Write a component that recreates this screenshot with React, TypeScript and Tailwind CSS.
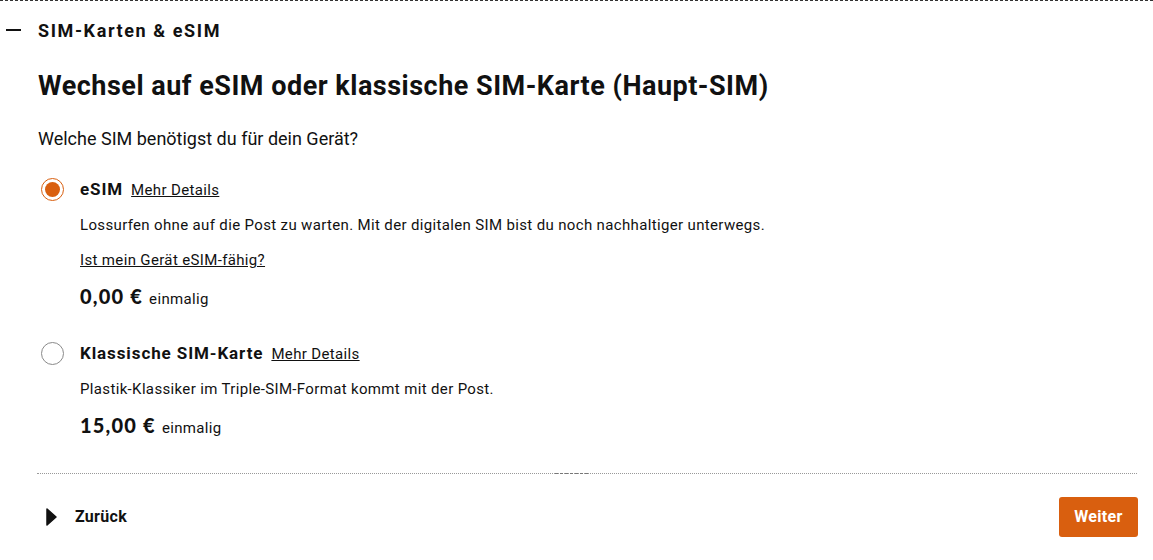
import React, {useState} from "react";

type SimOption = {
  id: string;
  label: string;
  description: string;
  checkLink?: string;
  price: string;
};

const OPTIONS: SimOption[] = [
  {
    id: "esim",
    label: "eSIM",
    description:
      "Lossurfen ohne auf die Post zu warten. Mit der digitalen SIM bist du noch nachhaltiger unterwegs.",
    checkLink: "Ist mein Gerät eSIM-fähig?",
    price: "0,00 €",
  },
  {
    id: "classic",
    label: "Klassische SIM-Karte",
    description: "Plastik-Klassiker im Triple-SIM-Format kommt mit der Post.",
    price: "15,00 €",
  },
];

const Radio = ({checked}: {checked: boolean}) => (
  <span
    className={`flex items-center justify-center w-[23px] h-[23px] rounded-full border shrink-0 ${
      checked ? "border-[#d95f0f]" : "border-[#8a8a8a]"
    }`}
  >
    {checked && <span className="w-[15px] h-[15px] rounded-full bg-[#d95f0f]" />}
  </span>
);

const OptionRow = ({
  option,
  checked,
  onSelect,
}: {
  option: SimOption;
  checked: boolean;
  onSelect: Function;
}) => (
  <div className="flex" onClick={() => onSelect(option.id)}>
    <div className="w-[42px] pl-[3px] pt-[1px]">
      <Radio checked={checked} />
    </div>
    <div className="flex flex-col">
      <div className="flex items-baseline gap-[8px] h-[26px]">
        <span className="text-[17px] font-bold tracking-[0.9px]">{option.label}</span>
        <a className="text-[15px] underline tracking-[0.35px] cursor-pointer">Mehr Details</a>
      </div>
      <p className="text-[15px] mt-[12px] leading-[20px] tracking-[0.35px]">{option.description}</p>
      {option.checkLink && (
        <a className="text-[15px] underline mt-[15px] leading-[20px] tracking-[0.35px] cursor-pointer">
          {option.checkLink}
        </a>
      )}
      <div className="flex items-baseline gap-[6px] mt-[11px]">
        <span className="font-['Lato'] font-black text-[20px] tracking-[1.2px]">{option.price}</span>
        <span className="text-[15px] tracking-[0.35px]">einmalig</span>
      </div>
    </div>
  </div>
);

export default function App() {
  const [selected, setSelected] = useState("esim");

  return (
    <div className="w-[1153px] h-[560px] bg-white text-[#111] font-['Roboto',sans-serif] border-t border-dashed border-[#333] overflow-hidden">
      <div className="flex items-center h-[58px] pl-[6px]">
        <span className="w-[15px] h-[2px] bg-[#111] mr-[17px]" />
        <span className="text-[18px] font-bold tracking-[1.6px]">SIM-Karten &amp; eSIM</span>
      </div>
      <div className="px-[38px]">
        <h2 className="text-[27px] font-bold leading-[34px] mt-[10px] tracking-[0.5px]">
          Wechsel auf eSIM oder klassische SIM-Karte (Haupt-SIM)
        </h2>
        <p className="text-[18px] mt-[24px] leading-[24px]">
          Welche SIM benötigst du für dein Gerät?
        </p>
        <div className="flex flex-col gap-[30px] mt-[26px]">
          {OPTIONS.map(o => (
            <OptionRow
              key={o.id}
              option={o}
              checked={selected === o.id}
              onSelect={setSelected}
            />
          ))}
        </div>
      </div>
      <div className="mx-[37px] mt-[33px] w-[1100px] border-t border-dotted border-[#999] relative">
        <span className="absolute left-[518px] -top-px w-[33px] border-t border-dashed border-[#777]" />
      </div>
      <div className="flex items-center justify-between pl-[46px] pr-[15px] mt-[23px]">
        <button className="flex items-center gap-[18px] text-[16px] font-bold tracking-[0.3px]">
          <svg width="11" height="18" viewBox="0 0 11 18">
            <path d="M1 1 L10 9 L1 17 Z" fill="#111" stroke="#111" strokeLinejoin="round" strokeWidth="1.5" />
          </svg>
          Zurück
        </button>
        <button className="bg-[#d95f0f] text-white font-bold text-[16px] w-[79px] h-[40px] rounded-[3px] tracking-[0.3px]">
          Weiter
        </button>
      </div>
    </div>
  );
}
